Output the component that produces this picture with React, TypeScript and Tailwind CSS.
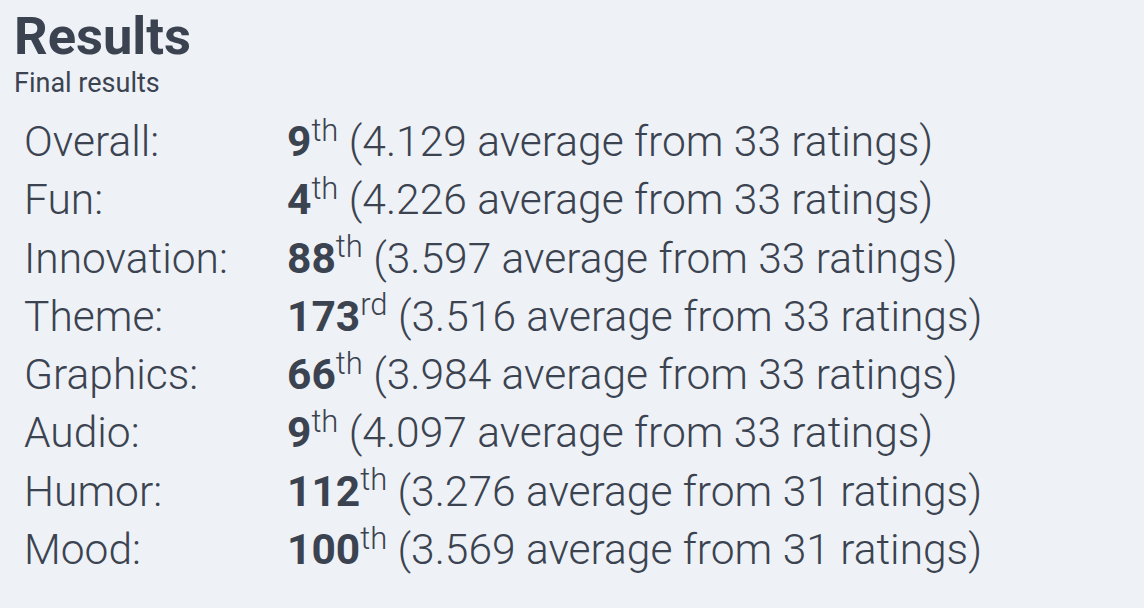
import React from 'react';

const results = [
  { label: 'Overall:', rank: '9', suffix: 'th', avg: '4.129', count: 33 },
  { label: 'Fun:', rank: '4', suffix: 'th', avg: '4.226', count: 33 },
  { label: 'Innovation:', rank: '88', suffix: 'th', avg: '3.597', count: 33 },
  { label: 'Theme:', rank: '173', suffix: 'rd', avg: '3.516', count: 33 },
  { label: 'Graphics:', rank: '66', suffix: 'th', avg: '3.984', count: 33 },
  { label: 'Audio:', rank: '9', suffix: 'th', avg: '4.097', count: 33 },
  { label: 'Humor:', rank: '112', suffix: 'th', avg: '3.276', count: 31 },
  { label: 'Mood:', rank: '100', suffix: 'th', avg: '3.569', count: 31 },
];

const App: React.FC = () => {
  return (
    <div className="min-h-[608px] bg-[#eef1f6] pt-[9px] pl-[14px] text-[#3b4350] font-['Roboto',sans-serif]">
      {/* Header */}
      <h1 className="text-[52.5px] leading-[54px] font-bold">Results</h1>
      <p className="mt-[5px] text-[27px] leading-[30px] font-normal">Final results</p>

      {/* Ratings table */}
      <div className="mt-[15px] pl-[10px]">
        {results.map((r) => (
          <div key={r.label} className="flex text-[42.5px] leading-[58.3px] font-light whitespace-nowrap">
            <div className="w-[263px] shrink-0">{r.label}</div>
            <div>
              <span className="font-bold">{r.rank}</span>
              <sup className="text-[31px]">{r.suffix}</sup>{' '}
              ({r.avg} average from {r.count} ratings)
            </div>
          </div>
        ))}
      </div>
    </div>
  );
};

export default App;
